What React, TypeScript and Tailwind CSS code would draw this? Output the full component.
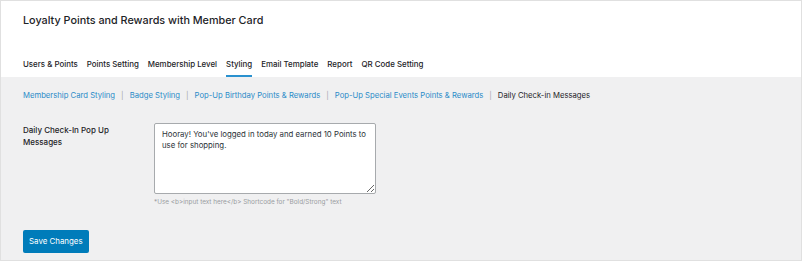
const tabs = [
  "Users & Points",
  "Points Setting",
  "Membership Level",
  "Styling",
  "Email Template",
  "Report",
  "QR Code Setting",
];

const subLinks = [
  "Membership Card Styling",
  "Badge Styling",
  "Pop-Up Birthday Points & Rewards",
  "Pop-Up Special Events Points & Rewards",
];

const App = () => {
  return (
    <div
      className="h-[261px] w-[802px] overflow-hidden border border-[#e0e0e0] bg-[#f0f0f1] text-[#1d2327]"
      style={{ fontFamily: "Inter, 'Noto Sans', sans-serif" }}
    >
      {/* Header */}
      <header className="bg-white px-[22px] pt-[12px]">
        <h1 className="text-[10.8px] font-medium leading-[16px]">
          Loyalty Points and Rewards with Member Card
        </h1>
        <nav className="mt-[29px] flex gap-[9px]">
          {tabs.map((tab) => (
            <span
              key={tab}
              className={
                "border-b-2 pb-[5px] text-[7.9px] font-medium leading-[12px] " +
                (tab === "Styling" ? "border-[#2a91cf]" : "border-transparent")
              }
            >
              {tab}
            </span>
          ))}
        </nav>
      </header>

      {/* Sub navigation */}
      <div className="flex items-center px-[22px] pt-[13px] text-[7.7px] leading-[12px]">
        {subLinks.map((link) => (
          <span key={link} className="flex items-center">
            <a className="text-[#2a8bc8]">{link}</a>
            <span className="mx-[6px] text-[#a7aaad]">|</span>
          </span>
        ))}
        <span className="text-[#1d2327]">Daily Check-in Messages</span>
      </div>

      {/* Form */}
      <div className="mt-[21px] flex px-[22px]">
        <label className="w-[131px] pt-[1px] text-[8px] font-medium leading-[12px]">
          Daily Check-In Pop Up
          <br />
          Messages
        </label>
        <div>
          <textarea
            className="block h-[71px] w-[222px] resize-y rounded-[2px] border border-[#a7aaad] bg-white px-[7px] py-[5px] text-[7.8px] leading-[11px] text-[#2c3338] outline-none"
            defaultValue="Hooray! You've logged in today and earned 10 Points to use for shopping."
          />
          <p className="mt-[3px] text-[6.4px] leading-[10px] text-[#9a9da1]">
            *Use &lt;b&gt;input text here&lt;/b&gt; Shortcode for "Bold/Strong" text
          </p>
        </div>
      </div>

      <button className="ml-[22px] mt-[23px] h-[23px] rounded-[2px] bg-[#007cba] px-[6px] text-[7.9px] text-white">
        Save Changes
      </button>
    </div>
  );
};

export default App;
